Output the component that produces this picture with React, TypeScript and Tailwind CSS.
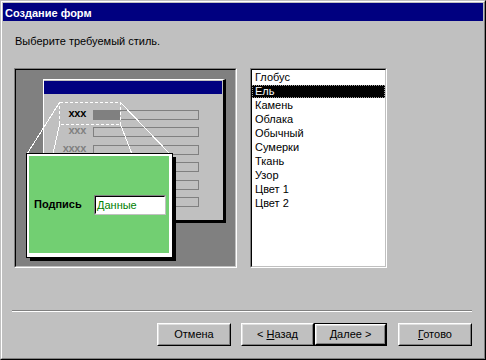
import React from "react";

function Btn({ w, def, children }: { w: string; def?: boolean; children: React.ReactNode }) {
  const face = (
    <div className="h-full w-full border border-t-white border-l-white border-r-black border-b-black">
      <div className="h-full w-full border border-t-[#dfdfdf] border-l-[#dfdfdf] border-r-[#808080] border-b-[#808080] flex items-center justify-center text-[11px] leading-[13px] text-black bg-[#c0c0c0]">
        {children}
      </div>
    </div>
  );
  if (def) {
    return <div className={`${w} h-[23px] border border-black`}>{face}</div>;
  }
  return <div className={`${w} h-[23px]`}>{face}</div>;
}

export default function App() {
  const items = ["Глобус", "Ель", "Камень", "Облака", "Обычный", "Сумерки", "Ткань", "Узор", "Цвет 1", "Цвет 2"];
  return (
    <div className="w-[486px] h-[360px] bg-[#c0c0c0] border border-t-[#c0c0c0] border-l-[#c0c0c0] border-r-black border-b-black font-['Liberation_Sans',Arial,sans-serif] text-black">
      <div className="h-full w-full border border-t-white border-l-white border-r-[#808080] border-b-[#808080] p-px flex flex-col">
        <div className="h-[18px] bg-[#000080] text-white font-bold text-[11px] leading-[18px] pl-[2px] pt-px">
          Создание форм
        </div>
        <div className="mt-[14px] pl-[12px] text-[11px] leading-[13px] h-[13px]">Выберите требуемый стиль.</div>

        <div className="mt-[20px] pl-[11px] flex gap-[13px] h-[200px]">
          {/* preview */}
          <div className="w-[223px] h-[200px] border border-t-[#808080] border-l-[#808080] border-r-white border-b-white">
            <div className="relative h-full w-full border border-t-black border-l-black border-r-[#c0c0c0] border-b-[#c0c0c0] bg-[#808080] overflow-hidden">
              {/* mini window */}
              <div className="absolute left-[27px] top-[9px] w-[183px] h-[144px] bg-[#c0c0c0] border-t border-l border-t-white border-l-white border-r-[3px] border-b-[3px] border-r-black border-b-black">
                <div className="mt-px mr-px h-[13px] bg-[#000080]" />
              </div>
              {/* fields */}
              <div className="absolute left-[77px] top-[40px] w-[106px] h-[10px] border border-[#808080]" />
              <div className="absolute left-[77px] top-[40px] w-[27px] h-[10px] bg-[#808080]" />
              <div className="absolute left-[77px] top-[57px] w-[106px] h-[10px] border border-[#808080]" />
              <div className="absolute left-[77px] top-[75px] w-[106px] h-[10px] border border-[#808080]" />
              <div className="absolute left-[77px] top-[92px] w-[106px] h-[10px] border border-[#808080]" />
              <div className="absolute left-[77px] top-[110px] w-[106px] h-[10px] border border-[#808080]" />
              <div className="absolute left-[77px] top-[127px] w-[106px] h-[10px] border border-[#808080]" />
              {/* labels */}
              <div className="absolute left-[40px] top-[38px] w-[30px] text-right text-[11px] leading-[11px] tracking-[-0.3px] font-bold text-black">xxx</div>
              <div className="absolute left-[40px] top-[55px] w-[30px] text-right text-[11px] leading-[11px] tracking-[-0.3px] font-bold text-[#808080]">xxx</div>
              <div className="absolute left-[40px] top-[73px] w-[30px] text-right text-[11px] leading-[11px] tracking-[-0.3px] font-bold text-[#808080]">xxxx</div>
              {/* zoom lines */}
              <svg className="absolute left-0 top-0" width="219" height="196">
                <g stroke="#ffffff" strokeWidth="1" fill="none" shapeRendering="crispEdges">
                  <line x1="43.5" y1="32.5" x2="11" y2="84" />
                  <line x1="43.5" y1="54.5" x2="37" y2="84" />
                  <line x1="104.5" y1="54.5" x2="116" y2="84" />
                  <line x1="104.5" y1="32.5" x2="154" y2="84" />
                  <rect x="43.5" y="32.5" width="61" height="22" strokeDasharray="3 2" />
                </g>
              </svg>
              {/* card */}
              <div className="absolute left-[14px] top-[87px] w-[146px] h-[104px] bg-black" />
              <div className="absolute left-[10px] top-[83px] w-[147px] h-[105px] border border-black bg-white pt-[2px] pl-[2px] pr-[3px] pb-[4px]">
                <div className="h-full w-full bg-[#72cf72] flex items-center pl-[5px]">
                  <div className="w-[60px] font-bold text-[11px] leading-[13px] text-black">Подпись</div>
                  <div className="w-[72px] h-[20px] border border-t-[#808080] border-l-[#808080] border-r-[#c0c0c0] border-b-[#c0c0c0]">
                    <div className="h-full w-full border border-t-black border-l-black border-r-white border-b-white bg-white pl-px text-[11px] leading-[16px] text-[#008000]">
                      Данные
                    </div>
                  </div>
                </div>
              </div>
            </div>
          </div>
          {/* list */}
          <div className="w-[137px] h-[200px] border border-t-[#808080] border-l-[#808080] border-r-white border-b-white">
            <div className="h-full w-full border border-t-black border-l-black border-r-[#c0c0c0] border-b-[#c0c0c0] bg-white flex flex-col">
              {items.map((it) =>
                it === "Ель" ? (
                  <div key={it} className="h-[14px] pt-px">
                    <div className="h-[13px] bg-black text-white border border-dotted border-[#a0a0a0] pl-[2px] text-[11px] leading-[11px]">
                      {it}
                    </div>
                  </div>
                ) : (
                  <div key={it} className="h-[14px] pl-[3px] text-[11px] leading-[14px]">
                    {it}
                  </div>
                )
              )}
            </div>
          </div>
        </div>

        <div className="mt-[42px] ml-[9px] w-[460px] h-[2px] border-t border-b border-t-[#808080] border-b-white" />

        <div className="mt-[11px] pl-[154px] flex">
          <Btn w="w-[74px]">Отмена</Btn>
          <div className="ml-[10px]">
            <Btn w="w-[73px]">
              <span>
                &lt; <u className="underline-offset-1">Н</u>азад
              </span>
            </Btn>
          </div>
          <Btn w="w-[73px]" def>
            <span>
              <u className="underline-offset-1">Д</u>алее &gt;
            </span>
          </Btn>
          <div className="ml-[11px]">
            <Btn w="w-[74px]">
              <span>
                <u className="underline-offset-1">Г</u>отово
              </span>
            </Btn>
          </div>
        </div>
      </div>
    </div>
  );
}
